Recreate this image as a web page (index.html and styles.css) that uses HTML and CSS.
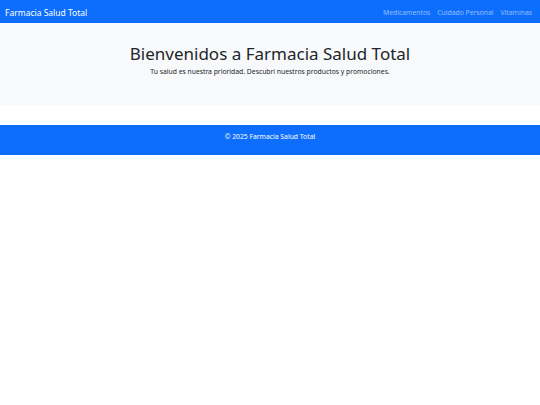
FILE: index.html
```html
<!DOCTYPE html>
<html lang="es">
<head>
<meta charset="utf-8">
<title>Farmacia Salud Total</title>
<link rel="stylesheet" href="styles.css">
</head>
<body>
<nav class="navbar">
  <a class="brand" href="#">Farmacia Salud Total</a>
  <ul class="nav-links">
    <li><a href="#">Medicamentos</a></li>
    <li><a href="#">Cuidado Personal</a></li>
    <li><a href="#">Vitaminas</a></li>
  </ul>
</nav>
<header class="hero">
  <h1 class="hero-title">Bienvenidos a Farmacia Salud Total</h1>
  <p class="hero-text">Tu salud es nuestra prioridad. Descubrí nuestros productos y promociones.</p>
</header>
<footer class="footer">
  <p>© 2025 Farmacia Salud Total</p>
</footer>
</body>
</html>
```
FILE: styles.css
```css
* { box-sizing: border-box; }
body {
  margin: 0;
  font-family: "Noto Sans", "Open Sans", sans-serif;
  color: #212529;
  background: #fff;
}
.navbar {
  background: #0d6efd;
  height: 23px;
  display: flex;
  align-items: center;
  justify-content: space-between;
  padding: 1px 8px 0 5px;
}
.brand {
  color: #fff;
  text-decoration: none;
  font-size: 8.5px;
}
.nav-links {
  list-style: none;
  margin: 0;
  padding: 0;
  display: flex;
  gap: 7px;
  font-size: 6.8px;
}
.nav-links a {
  color: rgba(255,255,255,0.55);
  text-decoration: none;
}
.hero {
  background: #f8f9fa;
  height: 82px;
  text-align: center;
  padding-top: 21px;
}
.hero-title {
  margin: 0;
  font-size: 17px;
  font-weight: 400;
  line-height: 1.2;
}
.hero-text {
  margin: 3px 0 0;
  font-size: 6.8px;
}
.footer {
  margin-top: 20px;
  background: #0d6efd;
  height: 30px;
  padding-top: 7px;
  text-align: center;
}
.footer p {
  margin: 0;
  color: #fff;
  font-size: 6.8px;
}
```
